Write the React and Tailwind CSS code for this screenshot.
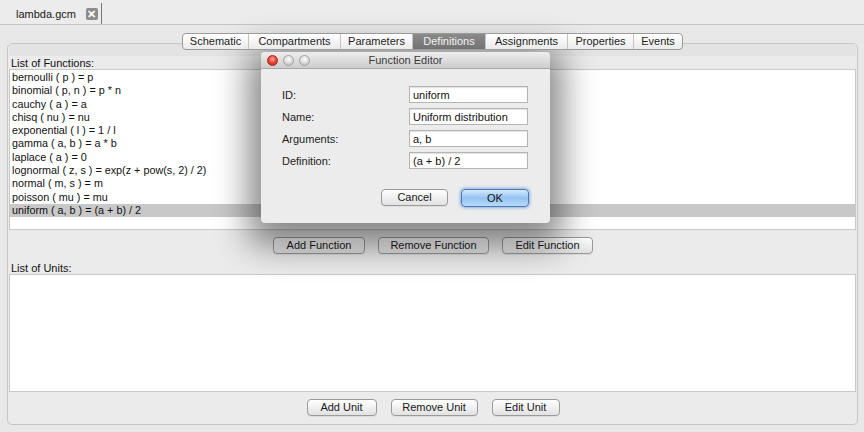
const functions = [
  'bernoulli ( p ) = p',
  'binomial ( p, n ) = p * n',
  'cauchy ( a ) = a',
  'chisq ( nu ) = nu',
  'exponential ( l ) = 1 / l',
  'gamma ( a, b ) = a * b',
  'laplace ( a ) = 0',
  'lognormal ( z, s ) = exp(z + pow(s, 2) / 2)',
  'normal ( m, s ) = m',
  'poisson ( mu ) = mu',
  'uniform ( a, b ) = (a + b) / 2',
];

// largura de cada segmento medida na tela
const tabs = [
  ['Schematic', 'w-[65px]'],
  ['Compartments', 'w-[92px]'],
  ['Parameters', 'w-[72px]'],
  ['Definitions', 'w-[73px]'],
  ['Assignments', 'w-[82px]'],
  ['Properties', 'w-[66px]'],
  ['Events', 'w-[49px]'],
];

const fields = [
  ['ID:', 'uniform'],
  ['Name:', 'Uniform distribution'],
  ['Arguments:', 'a, b'],
  ['Definition:', '(a + b) / 2'],
];

function AquaButton({ children, className = '' }) {
  return (
    <button
      className={`h-[17px] rounded-[4px] border border-[#9a9a9a] bg-gradient-to-b from-white to-[#e2e2e2] text-[11px] leading-[15px] text-[#1a1a1a] shadow-[0_1px_0_rgba(0,0,0,0.06)] ${className}`}
    >
      {children}
    </button>
  );
}

function TrafficLight({ red }) {
  return (
    <span
      className={`h-[11px] w-[11px] rounded-full border ${
        red
          ? 'border-[#a4261c] bg-[radial-gradient(circle_at_50%_35%,#ffb0a6_0%,#f0483a_45%,#b8211a_100%)]'
          : 'border-[#a3a3a3] bg-[radial-gradient(circle_at_50%_35%,#ffffff_0%,#dcdcdc_50%,#b8b8b8_100%)]'
      }`}
    />
  );
}

function FunctionEditor() {
  return (
    <div className="absolute left-[261px] top-[52px] flex h-[171px] w-[289px] flex-col overflow-hidden rounded-[4px] bg-[#ececec] shadow-[0_10px_34px_12px_rgba(0,0,0,0.48)]">
      {/* barra de título */}
      <div className="relative flex h-[17px] items-center border-b border-[#a9a9a9] bg-gradient-to-b from-[#eeeeee] to-[#cdcdcd]">
        <div className="flex gap-[5px] pl-[6px]">
          <TrafficLight red />
          <TrafficLight />
          <TrafficLight />
        </div>
        <span className="absolute inset-x-0 text-center text-[11px] text-[#3a3a3a]">Function Editor</span>
      </div>

      <div className="flex flex-col gap-[5px] pl-[21px] pr-[22px] pt-[17px]">
        {fields.map(([label, value]) => (
          <div key={label} className="flex h-[17px] items-center justify-between">
            <span className="pt-[1px] text-[11px] text-[#222]">{label}</span>
            <div className="flex h-[17px] w-[119px] items-center border border-[#b4b4b4] bg-white px-[3px] pt-[1px] text-[11px] text-[#111] shadow-[inset_0_1px_1px_rgba(0,0,0,0.12)]">
              {value}
            </div>
          </div>
        ))}
      </div>

      <div className="mt-[20px] flex justify-end gap-[13px] pr-[21px]">
        <AquaButton className="w-[67px]">Cancel</AquaButton>
        <button className="h-[18px] w-[68px] rounded-[4px] border border-[#4f78b0] bg-gradient-to-b from-[#d8eafc] via-[#93c3f1] to-[#b9dbfb] text-[11px] leading-[16px] text-[#111] shadow-[0_0_3px_1px_rgba(90,150,230,0.7)]">
          OK
        </button>
      </div>
    </div>
  );
}

export default function App() {
  return (
    <div className="relative h-[432px] w-[864px] overflow-hidden bg-[#e8e8e8] font-['Liberation_Sans',Arial,sans-serif] text-[#111]">
      {/* aba do arquivo */}
      <div className="flex h-[25px] items-end border-b border-[#c4c4c4] bg-[#ececec]">
        <div className="flex h-[21px] items-center border-r border-[#7a7a7a] pl-[16px] pr-[3px] pt-[1px]">
          <span className="text-[11px] text-[#1a1a1a]">lambda.gcm</span>
          <span className="ml-[10px] flex h-[12px] w-[12px] items-center justify-center rounded-[2px] bg-[#8c8c8c] text-[11px] font-bold leading-none text-white">
            ✕
          </span>
        </div>
      </div>

      <div className="flex flex-col px-[7px]">
        {/* abas segmentadas */}
        <div className="relative z-10 mt-[8px] -mb-[7px] flex justify-center pl-[1px]">
          <div className="flex h-[17px] overflow-hidden rounded-[4px] border border-[#9b9b9b] bg-gradient-to-b from-white to-[#ebebeb] text-[11px]">
            {tabs.map(([t, w], i) => (
              <span
                key={t}
                className={`flex items-center justify-center ${w} ${i > 0 ? 'border-l border-[#c4c4c4]' : ''} ${
                  t === 'Definitions' ? 'bg-gradient-to-b from-[#8a8a8a] to-[#737373] text-[#f2f2f2]' : 'text-[#1e1e1e]'
                }`}
              >
                {t}
              </span>
            ))}
          </div>
        </div>

        {/* painel principal */}
        <div className="flex h-[382px] w-[851px] flex-col rounded-[5px] border border-[#c6c6c6] bg-[#ebebeb] px-[1px]">
          <div className="h-[12px] bg-[#e3e3e3]" />
          <div className="h-[13px] pl-[2px] pt-[1px] text-[11px] leading-[12px]">List of Functions:</div>
          <div className="h-[161px] border border-[#c9c9c9] bg-white pt-[1px]">
            {functions.map((f, i) => (
              <div
                key={f}
                className={`h-[13.3px] pl-[2px] text-[10.8px] leading-[13.3px] ${i === functions.length - 1 ? 'bg-[#c8c8c8]' : ''}`}
              >
                {f}
              </div>
            ))}
          </div>

          <div className="mt-[7px] flex justify-center gap-[13px] pl-[1px]">
            <AquaButton className="w-[92px]">Add Function</AquaButton>
            <AquaButton className="w-[111px]">Remove Function</AquaButton>
            <AquaButton className="w-[91px]">Edit Function</AquaButton>
          </div>

          <div className="mt-[8px] h-[12px] pl-[2px] text-[11px] leading-[12px]">List of Units:</div>
          <div className="h-[118px] border border-[#c9c9c9] bg-white" />

          <div className="mt-[7px] flex justify-center gap-[14px] pl-[1px]">
            <AquaButton className="w-[70px]">Add Unit</AquaButton>
            <AquaButton className="w-[87px]">Remove Unit</AquaButton>
            <AquaButton className="w-[68px]">Edit Unit</AquaButton>
          </div>
        </div>
      </div>

      <FunctionEditor />
    </div>
  );
}
